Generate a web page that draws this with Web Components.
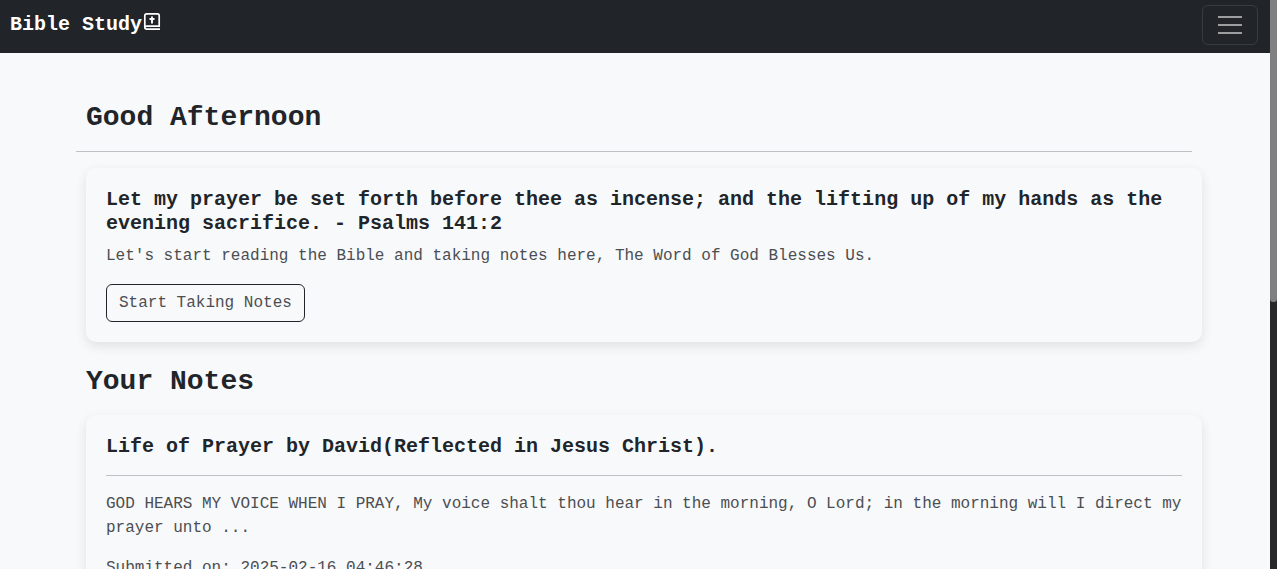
<!DOCTYPE html>
<html lang="en">
<head>
<meta charset="utf-8">
<meta name="viewport" content="width=device-width, initial-scale=1">
<title>Bible Study</title>
<style>
  body {
    margin: 0;
    font: 16px/24px "Courier New", Courier, "Nimbus Mono PS", FreeMono, "Liberation Mono", monospace;
    color: #212529;
    background: #f8f9fb;
    --page: #f8f9fb;
    --ink: #212529;
    --soft: #4b4e52;
    --rule: #bfc1c4;
  }
</style>
</head>
<body>
<study-shell>
  <study-nav slot="nav" brand="Bible Study"></study-nav>
  <section-title>Good Afternoon</section-title>
  <section-rule></section-rule>
  <study-card heading="Let my prayer be set forth before thee as incense; and the lifting up of my hands as the evening sacrifice. - Psalms 141:2">
    <card-text>Let's start reading the Bible and taking notes here, The Word of God Blesses Us.</card-text>
    <outline-button>Start Taking Notes</outline-button>
  </study-card>
  <section-title>Your Notes</section-title>
  <study-card ruled heading="Life of Prayer by David(Reflected in Jesus Christ).">
    <card-text>GOD HEARS MY VOICE WHEN I PRAY, My voice shalt thou hear in the morning, O Lord; in the morning will I direct my prayer unto ...</card-text>
    <card-text>Submitted on: 2025-02-16 04:46:28</card-text>
  </study-card>
</study-shell>
<script>
  function define(name, html, setup) {
    customElements.define(name, class extends HTMLElement {
      constructor() {
        super();
        this.attachShadow({ mode: "open" }).innerHTML = html;
      }
      connectedCallback() {
        if (setup) setup(this, this.shadowRoot);
      }
    });
  }

  define("study-shell", `
    <style>
      :host { display: flex; height: 100vh; overflow: hidden; background: var(--page); }
      .view { flex: 1; min-width: 0; overflow: hidden; }
      main { padding: 25px 68px 24px 76px; }
      .rail { flex: 0 0 7px; background: #282828; }
      .thumb { height: 53%; background: #808080; border-radius: 0 0 3px 3px; }
    </style>
    <div class="view">
      <slot name="nav"></slot>
      <main><slot></slot></main>
    </div>
    <div class="rail" aria-hidden="true"><div class="thumb"></div></div>
  `);

  define("study-nav", `
    <style>
      :host { display: block; }
      nav { display: flex; align-items: flex-start; justify-content: space-between;
            box-sizing: border-box; height: 53px; padding: 5px 12px 8px 10px; background: var(--ink); }
      a { display: flex; align-items: center; height: 40px; color: #fff; text-decoration: none;
          font-size: 20px; line-height: 30px; font-weight: 700; }
      a svg { display: block; margin-bottom: 6px; }
      button { display: grid; place-items: center; width: 56px; height: 40px; padding: 0;
               border: 1px solid #383b3f; border-radius: 6px; background: none; }
      button svg { display: block; }
    </style>
    <nav>
      <a href="#"><span></span><svg width="20" height="20" viewBox="0 0 20 20" fill="none" stroke="#fff" aria-hidden="true">
        <path stroke-width="1.700" d="M18 17.200H4.800Q2.800 17.200 2.800 15.200V3.800Q2.800 1.800 4.800 1.800H15.500Q17.200 1.800 17.200 3.500V14.100H4.800Q2.800 14.100 2.800 15.800"/>
        <path stroke-width="1.900" d="M10 4.500V11.500M7.500 7H12.500"/>
      </svg></a>
      <button type="button" aria-label="Toggle navigation">
        <svg width="30" height="30" viewBox="0 0 30 30" fill="none" stroke="#9b9d9f" stroke-width="2" aria-hidden="true">
          <path d="M3 7h24M3 15h24M3 23h24"/>
        </svg>
      </button>
    </nav>
  `, (el, root) => { root.querySelector("span").textContent = el.getAttribute("brand"); });

  define("section-title", `
    <style>
      :host { display: block; padding-top: 23px; }
      h2 { margin: 0 0 16px 10px; font-size: 28px; line-height: 34px; font-weight: 700; }
    </style>
    <h2><slot></slot></h2>
  `);

  define("section-rule", `
    <style>
      :host { display: block; }
      hr { margin: 16px 10px 16px 0; border: 0; border-top: 1px solid var(--rule); }
    </style>
    <hr>
  `);

  define("study-card", `
    <style>
      :host { display: block; margin-left: 10px; }
      article { padding: 20px; border-radius: 10px; background: var(--page);
                box-shadow: 0 4px 12px rgba(0, 0, 0, .1); }
      h3 { margin: 0 0 8px; font-size: 20px; line-height: 24px; font-weight: 700; }
      hr { display: none; margin: 16px 0; border: 0; border-top: 1px solid var(--rule); }
      :host([ruled]) hr { display: block; }
    </style>
    <article><h3></h3><hr><slot></slot></article>
  `, (el, root) => { root.querySelector("h3").textContent = el.getAttribute("heading"); });

  define("card-text", `
    <style>
      :host { display: block; }
      p { margin: 0 0 16px; color: var(--soft); }
    </style>
    <p><slot></slot></p>
  `);

  define("outline-button", `
    <style>
      :host { display: block; }
      button { display: block; padding: 6px 12px; border: 1px solid var(--ink); border-radius: 6px;
               background: none; color: var(--soft); font: inherit; cursor: pointer; }
    </style>
    <button type="button"><slot></slot></button>
  `);
</script>
</body>
</html>
